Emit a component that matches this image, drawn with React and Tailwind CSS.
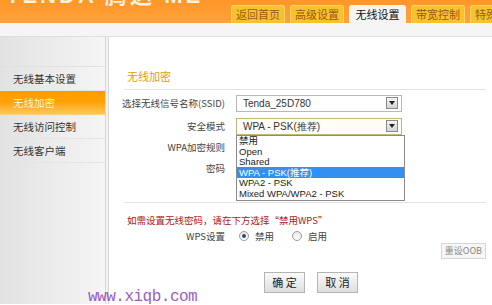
import React from "react";

const cn = { fontFamily: '"Noto Sans CJK SC", "Liberation Sans", sans-serif' };

const tabs = ["返回首页", "高级设置", "无线设置", "带宽控制", "特殊应用"];
const menu = ["无线基本设置", "无线加密", "无线访问控制", "无线客户端"];
const options = ["禁用", "Open", "Shared", "WPA - PSK(推荐)", "WPA2 - PSK", "Mixed WPA/WPA2 - PSK"];

function Arrow() {
  return (
    <span className="ml-auto mr-[3px] flex h-[12px] w-[12px] items-center justify-center border border-[#8a8a8a] bg-gradient-to-b from-[#f4f4f4] to-[#d4d4d4]">
      <svg width="6" height="4" viewBox="0 0 6 4">
        <path d="M0 0h6L3 4z" fill="#222" />
      </svg>
    </span>
  );
}

function Radio({ on }) {
  return (
    <span className="flex h-[10px] w-[10px] items-center justify-center rounded-full border border-[#9a9a9a] bg-gradient-to-b from-[#e8e8e8] to-white">
      {on && <span className="h-[4px] w-[4px] rounded-full bg-[#2a4a80]" />}
    </span>
  );
}

function Label({ children }) {
  return <div className="flex w-[101px] justify-end whitespace-nowrap text-[9.5px] text-[#444]">{children}</div>;
}

export default function App() {
  return (
    <div className="relative h-[305px] w-[492px] overflow-hidden bg-white text-[11px]" style={cn}>
      {/* header */}
      <div className="relative flex h-[23px] overflow-hidden bg-gradient-to-b from-[#ff9628] to-[#ffa238]">
        <div className="absolute left-[6px] top-[-21px] text-[22px] font-bold leading-[33px] tracking-[3px] text-[#fff3e0]" style={{ fontFamily: '"Liberation Sans", "Noto Sans CJK SC", sans-serif' }}>TENDA 腾达 ME</div>
        <div className="ml-[231px] mt-[5px] flex gap-[5px]">
          {tabs.map((t, i) => (
            <div
              key={t}
              className={
                "flex h-[18px] items-center justify-center rounded-t-[3px] border border-b-0 text-[11px] " +
                (i === 2
                  ? "w-[57px] border-[#f6f6f6] bg-[#f4f4f4] text-[#111]"
                  : "w-[54px] border-[#fbd466] bg-[#f7c22c] text-[#9a5a10]")
              }
            >
              {t}
            </div>
          ))}
        </div>
      </div>
      <div className="h-[14px] border-b border-[#dedede] bg-[#f5f5f5]" />

      <div className="flex h-[267px]">
        {/* sidebar */}
        <div className="w-[106px] border-r border-[#d8d8d8] bg-gradient-to-r from-[#e2e2e2] to-[#f5f5f5] pt-[29px]">
          <div className="border-t border-[#e0e0e0]" />
          {menu.map((m, i) => (
            <div
              key={m}
              className={
                "flex h-[24px] items-center border-b pl-[13px] text-[10.5px] " +
                (i === 1
                  ? "border-[#ffd27a] bg-gradient-to-b from-[#ff9a00] via-[#ffa200] to-[#ffc850] text-[#fff5d8]"
                  : "border-[#e4e4e4] text-[#333]")
              }
            >
              {m}
            </div>
          ))}
        </div>
        <div className="w-[3px] border-r border-[#d8d8d8] bg-[#f3f3f3]" />

        {/* content */}
        <div className="relative flex-1 pl-[15px] pr-[6px] pt-[31px]">
          <div className="pl-[3px] text-[11px] text-[#e0a000]">无线加密</div>
          <div className="mt-[4px] border-t border-[#e4e4e4]" />

          <div className="mt-[5px] flex h-[17px] items-center">
            <Label>选择无线信号名称(SSID)</Label>
            <div className="ml-[11px] flex h-[17px] w-[166px] items-center border border-[#b8b8b8] pl-[6px] text-[10px] text-[#333]" style={{ fontFamily: '"Liberation Sans", sans-serif' }}>
              Tenda_25D780
              <Arrow />
            </div>
          </div>

          <div className="relative mt-[6px] flex h-[17px] items-center">
            <Label>安全模式</Label>
            <div className="ml-[11px] flex h-[17px] w-[166px] items-center border border-[#c8b27a] bg-[#fffdf5] pl-[6px] text-[10px] text-[#333]" style={{ fontFamily: '"Liberation Sans", sans-serif' }}>
              WPA - PSK(推荐)
              <Arrow />
            </div>
            <div className="absolute left-[112px] top-[17px] z-10 w-[169px] border border-[#8a8a8a] bg-white pb-[1px] text-[9.5px] text-[#222]" style={{ fontFamily: '"Liberation Sans", "Noto Sans CJK SC", sans-serif' }}>
              {options.map((o, i) => (
                <div key={o} className={"flex h-[10.5px] items-center pl-[2px] leading-none " + (i === 3 ? "bg-[#3390f0] text-white" : "")}>
                  {o}
                </div>
              ))}
            </div>
          </div>

          <div className="mt-[5px] flex h-[15px] items-center">
            <Label>WPA加密规则</Label>
          </div>
          <div className="mt-[6px] flex h-[15px] items-center">
            <Label>密码</Label>
          </div>

          <div className="mt-[26px] border-t border-[#e4e4e4]" />

          <div className="mt-[10px] pl-[3px] text-[9.5px] text-[#b01818]">如需设置无线密码，请在下方选择“禁用WPS”</div>

          <div className="mt-[2px] flex h-[14px] items-center text-[9.5px] text-[#444]">
            <Label>WPS设置</Label>
            <div className="ml-[14px] flex items-center gap-[6px]">
              <Radio on />
              <span>禁用</span>
            </div>
            <div className="ml-[18px] flex items-center gap-[6px]">
              <Radio />
              <span>启用</span>
            </div>
          </div>

          <div className="mt-[0px] flex justify-end">
            <div className="flex h-[16px] items-center border border-[#d6d6d6] bg-[#f6f6f6] px-[3px] text-[9px] text-[#888]">重设OOB</div>
          </div>

          <div className="mt-[13px] flex gap-[12px] pl-[140px]">
            {["确 定", "取 消"].map((b) => (
              <div key={b} className="flex h-[21px] w-[41px] items-center justify-center border border-[#b4b4b4] bg-gradient-to-b from-[#fbfbfb] to-[#dedede] text-[11px] text-[#222]">
                {b}
              </div>
            ))}
          </div>
        </div>
      </div>

      <div className="absolute left-[88px] top-[285px] text-[16px] tracking-[-0.5px] text-[#9a5cc4]" style={{ fontFamily: '"Liberation Mono", monospace' }}>
        www.xiqb.com
      </div>
    </div>
  );
}
